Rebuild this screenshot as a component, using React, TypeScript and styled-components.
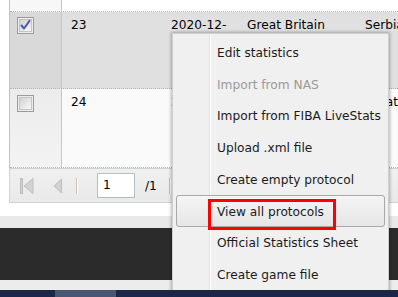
import React from "react";
import styled, { createGlobalStyle } from "styled-components";

const GlobalStyle = createGlobalStyle`
  html, body {
    margin: 0;
    padding: 0;
    background: #ffffff;
  }
  body {
    font-family: "DejaVu Sans", Verdana, sans-serif;
    font-size: 12.2px;
    color: #000;
  }
`;

const Page = styled.div`
  position: relative;
  width: 398px;
  height: 297px;
  overflow: hidden;
  background: #ffffff;
`;

const Grid = styled.div`
  margin-left: 9px;
  width: 440px;
  border-left: 1px solid #c4c4c4;
`;

const Row = styled.div<{ $h: number; $bg: string; $first: string }>`
  display: grid;
  grid-template-columns: 52px 100px 76px 118px 1fr;
  height: ${({ $h }) => $h}px;
  background: ${({ $bg }) => $bg};
  border-bottom: 1px dotted #b4b4b4;
  box-sizing: content-box;

  & > div:first-child {
    background: ${({ $first }) => $first};
    border-right: 1px solid #c6c6c6;
  }
`;

const Cell = styled.div`
  padding: 6px 0 0 9px;
  line-height: 14px;
  white-space: nowrap;
  overflow: hidden;
`;

const CheckCell = styled.div<{ $top: number }>`
  padding: ${({ $top }) => $top}px 0 0 7px;
  box-sizing: border-box;
`;

const Pager = styled.div`
  display: flex;
  align-items: center;
  height: 35px;
  margin-left: 9px;
  width: 440px;
  border: 1px solid #d2d2d2;
  border-right: none;
  background: linear-gradient(#f0f0f0, #e9e9e9);
  padding-left: 10px;
  box-sizing: border-box;
`;

const PagerButton = styled.span<{ $w: number; $gap: number }>`
  display: flex;
  width: ${({ $w }) => $w}px;
  height: 16px;
  margin-right: ${({ $gap }) => $gap}px;
`;

const PagerSep = styled.span`
  width: 1px;
  height: 16px;
  background: #c9c2b4;
  border-right: 1px solid #ffffff;
  margin-right: 19px;
`;

const PageInput = styled.div`
  width: 31px;
  height: 23px;
  border: 1px solid #b7bccb;
  background: #ffffff;
  box-sizing: content-box;
  padding-left: 5px;
  line-height: 23px;
  margin-right: 10px;
`;

const PageTotal = styled.span`
  margin-right: 12px;
`;

const Spacer = styled.div<{ $h: number; $bg: string }>`
  height: ${({ $h }) => $h}px;
  background: ${({ $bg }) => $bg};
`;

const NavBand = styled.div`
  position: relative;
  z-index: 5;
  display: flex;
  height: 7px;
  background: #1b2747;
`;

const NavTab = styled.span<{ $w: number; $active?: boolean }>`
  width: ${({ $w }) => $w}px;
  background: ${({ $active }) => ($active ? "#4a5571" : "transparent")};
`;

const Menu = styled.div`
  position: absolute;
  left: 172px;
  top: 33px;
  width: 217px;
  height: 264px;
  box-sizing: border-box;
  padding: 2px 3px;
  border: 1px solid #cfcfcf;
  background: linear-gradient(
    to right,
    #f0f0f0 36px,
    #e2e3e3 36px,
    #e2e3e3 37px,
    #ffffff 37px,
    #ffffff 38px,
    #f0f0f0 38px
  );
  box-shadow: 0 0 3px 1px rgba(0, 0, 0, 0.28);
  z-index: 3;
`;

const MenuItem = styled.div<{ $disabled?: boolean; $active?: boolean }>`
  position: relative;
  height: 31.75px;
  box-sizing: border-box;
  display: flex;
  align-items: center;
  padding: 2px 0 0 40px;
  color: ${({ $disabled }) => ($disabled ? "#9a9a9a" : "#1b1b1b")};
  border: 1px solid ${({ $active }) => ($active ? "#a8a8a8" : "transparent")};
  border-radius: 3px;
  background: ${({ $active }) =>
    $active ? "linear-gradient(#f5f5f5, #e6e6e6)" : "transparent"};
  white-space: nowrap;
`;

const Marker = styled.span`
  position: absolute;
  left: 31px;
  top: 3px;
  width: 122px;
  height: 25px;
  border: 3px solid #ff0000;
`;

function CheckBox({ checked }: { checked?: boolean }) {
  const id = checked ? "cbg1" : "cbg0";
  return (
    <svg width="17" height="17" viewBox="0 0 17 17">
      <defs>
        <linearGradient id={id} x1="0" y1="0" x2="1" y2="1">
          <stop offset="0" stopColor="#cfcfcf" />
          <stop offset="1" stopColor="#fbfbfb" />
        </linearGradient>
      </defs>
      <rect x="0.5" y="0.5" width="16" height="16" fill="#ececec" stroke="#9c9c9c" />
      <rect x="2.5" y="2.5" width="12" height="12" fill={`url(#${id})`} stroke="#c4c4c4" />
      {checked && (
        <path
          d="M4.5 8.5 L7 11.5 L12.5 3.8"
          fill="none"
          stroke="#4b5ca6"
          strokeWidth="2"
          strokeLinecap="round"
          strokeLinejoin="round"
        />
      )}
    </svg>
  );
}

function FirstIcon() {
  return (
    <svg width="14" height="16" viewBox="0 0 14 16">
      <rect x="0.5" y="0.5" width="2" height="15" fill="#d0d0d0" stroke="#bdbdbd" />
      <path d="M13 0.5 L4 8 L13 15.5 Z" fill="#d2d2d2" stroke="#bebebe" />
    </svg>
  );
}

function PrevIcon() {
  return (
    <svg width="9" height="16" viewBox="0 0 9 16">
      <path d="M8.5 1 L1 8 L8.5 15 Z" fill="#d2d2d2" stroke="#bebebe" />
    </svg>
  );
}

const menuItems = [
  { label: "Edit statistics" },
  { label: "Import from NAS", disabled: true },
  { label: "Import from FIBA LiveStats" },
  { label: "Upload .xml file" },
  { label: "Create empty protocol" },
  { label: "View all protocols", active: true },
  { label: "Official Statistics Sheet" },
  { label: "Create game file" },
];

export default function App() {
  return (
    <Page>
      <GlobalStyle />
      <Grid>
        <Row $h={11} $bg="#ffffff" $first="#f7f7f7">
          <div />
          <div />
          <div />
          <div />
          <div />
        </Row>
        <Row $h={76} $bg="#e0e0e0" $first="#d9d9d9">
          <CheckCell $top={5}>
            <CheckBox checked />
          </CheckCell>
          <Cell>23</Cell>
          <Cell>2020-12-</Cell>
          <Cell>Great Britain</Cell>
          <Cell>Serbia</Cell>
        </Row>
        <Row $h={78} $bg="#fafafa" $first="linear-gradient(#ececec, #f3f3f3)">
          <CheckCell $top={6}>
            <CheckBox />
          </CheckCell>
          <Cell>24</Cell>
          <Cell>2020-12-</Cell>
          <Cell>Great Britain</Cell>
          <Cell>Croatia</Cell>
        </Row>
      </Grid>
      <Pager>
        <PagerButton $w={14} $gap={19}>
          <FirstIcon />
        </PagerButton>
        <PagerButton $w={9} $gap={14}>
          <PrevIcon />
        </PagerButton>
        <PagerSep />
        <PageInput>1</PageInput>
        <PageTotal>/1</PageTotal>
        <PagerSep />
      </Pager>
      <Spacer $h={13} $bg="#ffffff" />
      <Spacer $h={12} $bg="#e9e9e9" />
      <Spacer $h={52} $bg="#2b2b2b" />
      <Spacer $h={10} $bg="#ececec" />
      <NavBand>
        <NavTab $w={55} />
        <NavTab $w={61} $active />
      </NavBand>
      <Menu>
        {menuItems.map((m) => (
          <MenuItem key={m.label} $disabled={m.disabled} $active={m.active}>
            {m.label}
            {m.active && <Marker />}
          </MenuItem>
        ))}
      </Menu>
    </Page>
  );
}
